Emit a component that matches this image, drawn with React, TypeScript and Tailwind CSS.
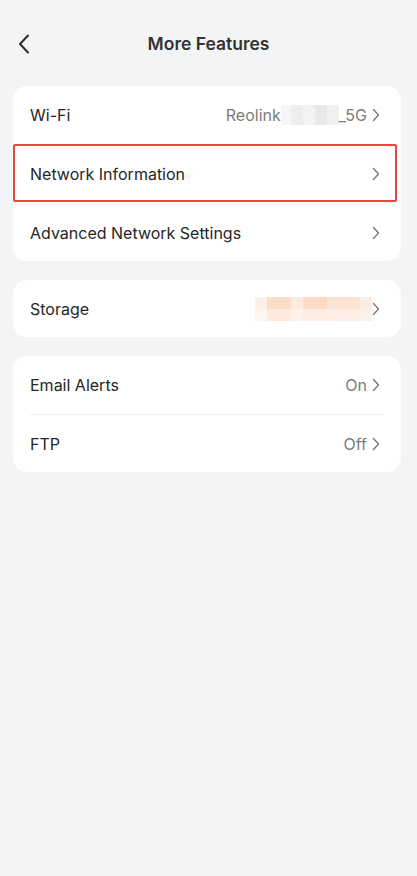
import React from 'react';

const Chevron = () => (
  <svg width="8" height="14" viewBox="0 0 8 14" fill="none" className="shrink-0">
    <path d="M1.5 1.5L6.5 7L1.5 12.5" stroke="#7a7a7a" strokeWidth="1.4" strokeLinecap="round" strokeLinejoin="round" />
  </svg>
);

function Row({
  label,
  value,
  highlight,
  divider,
  h = 'h-[59px]',
}: {
  label: string;
  value?: React.ReactNode;
  highlight?: boolean;
  divider?: boolean;
  h?: string;
}) {
  return (
    <div className="relative">
      <div className={`${h} flex items-center pl-[17px] pr-[21px]`}>
        <span className="flex-1 text-[16px] text-[#262626]">{label}</span>
        <div className="flex items-center gap-[5px] text-[16px] text-[#7c7c7c]">
          {value}
          <Chevron />
        </div>
      </div>
      {divider && <div className="mx-[17px] h-px bg-[#efefef]" />}
      {highlight && (
        <div className="absolute left-0 right-[4px] top-[0px] bottom-[1px] border-2 border-[#e8453c] rounded-[2px] pointer-events-none" />
      )}
    </div>
  );
}

export default function App() {
  return (
    <div
      className="min-h-[876px] w-full bg-[#f3f4f6]"
      style={{ fontFamily: 'Inter, "Noto Sans", sans-serif' }}
    >
      {/* Header */}
      <div className="relative h-[86px] flex items-start justify-center pt-[31px]">
        <svg width="12" height="20" viewBox="0 0 12 20" className="absolute left-[18px] top-[34px]" fill="none">
          <path d="M10 1.5L2 10L10 18.5" stroke="#2d2d2d" strokeWidth="2" strokeLinecap="round" strokeLinejoin="round" />
        </svg>
        <h1 className="text-[17.5px] font-semibold text-[#333333] leading-[26px]">More Features</h1>
      </div>

      <div className="px-[13px] pr-[16px] flex flex-col gap-[19px]">
        {/* Network card */}
        <div className="bg-white rounded-[14px] h-[175px] overflow-hidden">
          <Row
            label="Wi-Fi"
            h="h-[58px]"
            value={
              <span className="flex items-center">
                Reolink
                <span className="inline-flex h-[20px] w-[58px]">
                  <span className="w-[10px] bg-[#f6f6f6]" />
                  <span className="w-[12px] bg-[#eeeeee]" />
                  <span className="w-[12px] bg-[#f3f3f3]" />
                  <span className="w-[12px] bg-[#e8e8e8]" />
                  <span className="w-[12px] bg-[#f0f0f0]" />
                </span>
                _5G
              </span>
            }
          />
          <Row label="Network Information" highlight />
          <Row label="Advanced Network Settings" />
        </div>

        {/* Storage card */}
        <div className="bg-white rounded-[14px]">
          <div className="h-[57px] flex items-center pl-[17px] pr-[21px]">
            <span className="flex-1 text-[16px] text-[#262626]">Storage</span>
            <div className="flex items-center">
              <span className="flex flex-col h-[24px] w-[117px]">
                <span className="flex h-[12px]">
                  <span className="w-[12px] bg-[#fdeee6]" />
                  <span className="w-[24px] bg-[#fcdcc8]" />
                  <span className="w-[12px] bg-[#fdebe0]" />
                  <span className="w-[24px] bg-[#fcdac5]" />
                  <span className="w-[33px] bg-[#fde4d5]" />
                  <span className="w-[12px] bg-[#f8ece4]" />
                </span>
                <span className="flex h-[12px]">
                  <span className="w-[12px] bg-[#fef5f1]" />
                  <span className="w-[24px] bg-[#fdeadf]" />
                  <span className="w-[12px] bg-[#fdf1ea]" />
                  <span className="w-[24px] bg-[#fdece2]" />
                  <span className="w-[33px] bg-[#fdeee5]" />
                  <span className="w-[12px] bg-[#f8f1ec]" />
                </span>
              </span>
              <Chevron />
            </div>
          </div>
        </div>

        {/* Alerts card */}
        <div className="bg-white rounded-[14px]">
          <Row label="Email Alerts" value="On" divider h="h-[58px]" />
          <Row label="FTP" value="Off" h="h-[57px]" />
        </div>
      </div>
    </div>
  );
}
